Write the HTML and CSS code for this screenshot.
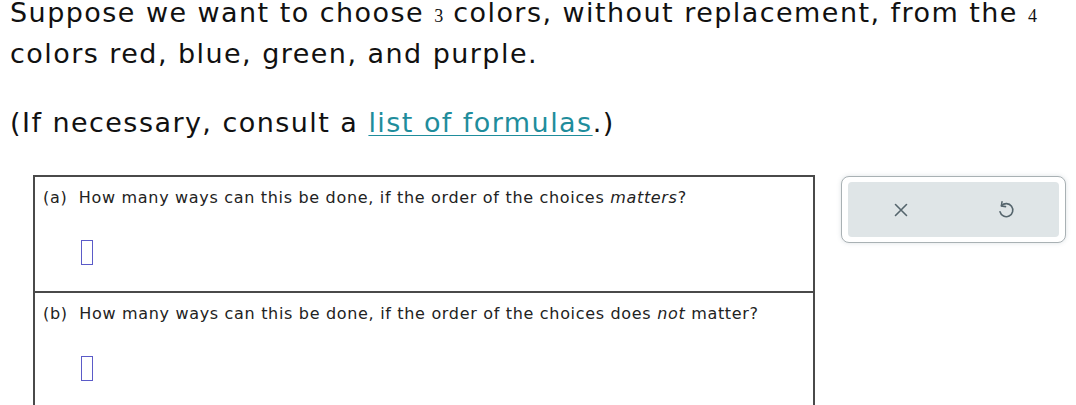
FILE: index.html
```html
<!DOCTYPE html>
<html>
<head>
<meta charset="utf-8">
<link rel="stylesheet" href="styles.css">
</head>
<body>
<p class="intro">Suppose we want to choose <span class="num">3</span> colors, without replacement, from the <span class="num">4</span> colors red, blue, green, and purple.</p>
<p class="intro note">(If necessary, consult a <a class="link" href="#">list of formulas</a>.)</p>
<div class="row">
  <div class="qbox">
    <div class="part">
      <div class="question">(a)&nbsp; How many ways can this be done, if the order of the choices <em>matters</em>?</div>
      <div class="answer"><span class="input"></span></div>
    </div>
    <div class="part divider">
      <div class="question">(b)&nbsp; How many ways can this be done, if the order of the choices does <em>not</em> matter?</div>
      <div class="answer"><span class="input"></span></div>
    </div>
  </div>
  <div class="panel">
    <div class="panel-inner">
      <button class="btn" aria-label="Clear">
        <svg width="16" height="16" viewBox="0 0 16 16"><path d="M2.5 2.5 L13.5 13.5 M13.5 2.5 L2.5 13.5" stroke="#55656d" stroke-width="1.6" fill="none" stroke-linecap="round"/></svg>
      </button>
      <button class="btn" aria-label="Undo">
        <svg width="20" height="20" viewBox="0 0 16 16"><path d="M4.4 4.6 A5.2 5.2 0 1 1 3.2 9.4" stroke="#55656d" stroke-width="1.25" fill="none" stroke-linecap="round"/><path d="M4.8 1.4 L4.3 4.8 L7.6 5.3" stroke="#55656d" stroke-width="1.25" fill="none" stroke-linecap="round" stroke-linejoin="round"/></svg>
      </button>
    </div>
  </div>
</div>
</body>
</html>
```
FILE: styles.css
```css
html, body {
  margin: 0;
  padding: 0;
  background: #ffffff;
}
body {
  padding-left: 10px;
  font-family: "DejaVu Sans", Verdana, sans-serif;
  color: #111;
  overflow: hidden;
}
.intro {
  font-size: 27px;
  line-height: 38px;
  letter-spacing: 1.45px;
  margin: -6px 0 0 0;
}
.num {
  font-family: "Liberation Serif", "Times New Roman", serif;
  font-size: 18px;
  letter-spacing: 0;
}
.note {
  margin-top: 31px;
}
.link {
  color: #1f8d9c;
  text-decoration: underline;
  text-decoration-thickness: 1px;
  text-underline-offset: 3px;
}
.row {
  display: flex;
  align-items: flex-start;
  margin-top: 33px;
  margin-left: 23px;
}
.qbox {
  width: 778px;
  border: 2px solid #4a4a4a;
  border-bottom: none;
  height: 400px;
}
.part {
  padding: 11px 0 25px 8px;
}
.divider {
  border-top: 2px solid #4a4a4a;
}
.question {
  font-size: 16px;
  line-height: 20px;
  letter-spacing: 0.68px;
  color: #222;
}
.question em {
  font-style: italic;
}
.answer {
  margin-top: 32px;
  padding-left: 38px;
  height: 26px;
}
.input {
  display: inline-block;
  width: 10px;
  height: 23px;
  border: 1.5px solid #5b5bc8;
}
.panel {
  margin-left: 26px;
  margin-top: 1px;
  width: 225px;
  height: 67px;
  border: 1px solid #a9b1b4;
  border-radius: 8px;
  box-shadow: 0 0 4px rgba(120, 140, 150, 0.25);
  padding: 5px 6px;
  box-sizing: border-box;
  background: #fff;
}
.panel-inner {
  display: flex;
  justify-content: space-around;
  align-items: center;
  height: 100%;
  background: #dfe5e7;
  border-radius: 4px;
}
.btn {
  border: none;
  background: transparent;
  padding: 0;
  display: flex;
  align-items: center;
  justify-content: center;
  width: 30px;
  height: 30px;
}
```
